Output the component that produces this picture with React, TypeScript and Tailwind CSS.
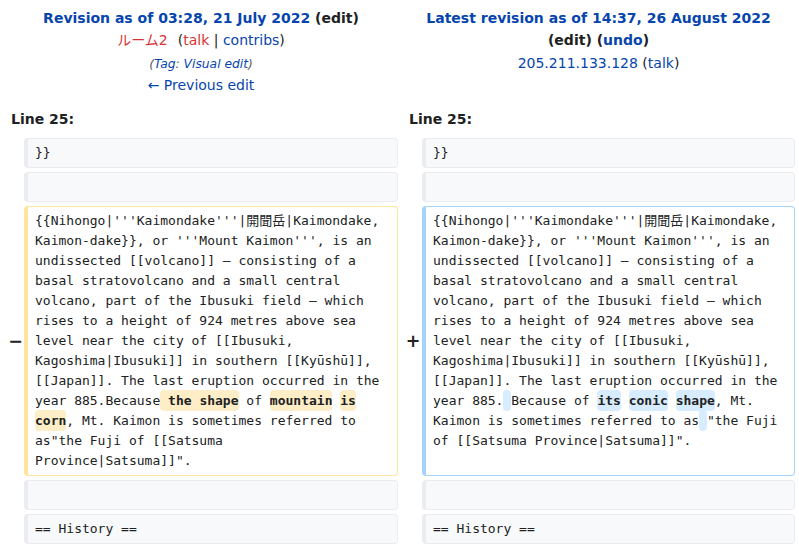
const ui = "font-['DejaVu_Sans','Noto_Sans_CJK_JP',sans-serif]";
const mono = "font-['DejaVu_Sans_Mono','Noto_Sans_CJK_JP',monospace]";

const link = "text-[#0645ad]";
const red = "text-[#d73333]";

function Del({ children }: { children: React.ReactNode }) {
  return <span className="rounded-[4px] bg-[#feeec8] py-[3.25px] font-bold">{children}</span>;
}

function Ins({ children }: { children: React.ReactNode }) {
  return <span className="rounded-[4px] bg-[#d8ecff] py-[3.25px] font-bold">{children}</span>;
}

const cell =
  "rounded-[4px] border border-l-4 pl-[7px] pr-[14px] py-[4px] text-[13px] leading-[20px] whitespace-pre-wrap break-words text-[#202122] " +
  mono;

function Context({ text }: { text?: string }) {
  return (
    <>
      <div />
      <div className={cell + " border-[#eaecf0] bg-[#f8f9fa]"}>{text ? text : <br />}</div>
      <div />
      <div className={cell + " border-[#eaecf0] bg-[#f8f9fa]"}>{text ? text : <br />}</div>
    </>
  );
}

const head =
  "{{Nihongo|'''Kaimondake'''|開聞岳|Kaimondake, Kaimon-dake}}, or '''Mount Kaimon''', is an undissected [[volcano]] — consisting of a basal stratovolcano and a small central volcano, part of the Ibusuki field — which rises to a height of 924 metres above sea level near the city of [[Ibusuki, Kagoshima|Ibusuki]] in southern [[Kyūshū]], [[Japan]]. The last eruption occurred in the year 885.";

export default function App() {
  return (
    <div className={"w-[799px] bg-white text-[14px] text-[#202122] " + ui}>
      <div className="grid grid-cols-[16px_374px_16px_373px] gap-[4px] p-[4px]">
        {/* old revision header */}
        <div className="col-span-2 px-[7px] pt-[3px] pb-[3px] text-center leading-[1.6]">
          <div className="font-bold">
            <span className={link}>Revision as of 03:28, 21 July 2022</span> (edit)
          </div>
          <div>
            <span className={red}>ルーム2</span>
            <span className="ml-[10px]">
              (<span className={red}>talk</span> | <span className={link}>contribs</span>)
            </span>
          </div>
          <div>
            <span className="text-[12.3px] italic text-[#54595d]">
              (<span className={link}>Tag</span>: <span className={link}>Visual edit</span>)
            </span>
          </div>
          <div className={link}>← Previous edit</div>
        </div>

        {/* new revision header */}
        <div className="col-span-2 px-[7px] pt-[3px] pb-[3px] text-center leading-[1.6]">
          <div className="font-bold">
            <span className={link}>Latest revision as of 14:37, 26 August 2022</span> (edit) (
            <span className={link}>undo</span>)
          </div>
          <div>
            <span className={link}>205.211.133.128</span> (<span className={link}>talk</span>)
          </div>
        </div>

        {/* line numbers */}
        <div className="col-span-2 px-[7px] py-[4px] font-bold leading-[1.6]">Line 25:</div>
        <div className="col-span-2 px-[7px] py-[4px] font-bold leading-[1.6]">Line 25:</div>

        <Context text="}}" />
        <Context />

        {/* changed paragraph */}
        <div className="flex items-center justify-center pl-[7px] text-[17.5px] font-bold">−</div>
        <div className={cell + " border-[#ffe49c] bg-white"}>
          {head}Because<Del> the shape</Del> of <Del>mountain</Del> <Del>is</Del> <Del>corn</Del>
          {', Mt. Kaimon is sometimes referred to as"the Fuji of [[Satsuma Province|Satsuma]]".'}
        </div>
        <div className="flex items-center justify-center pl-[6px] text-[17.5px] font-bold">+</div>
        <div className={cell + " border-[#a3d3ff] bg-white"}>
          {head}
          <Ins> </Ins>Because of <Ins>its</Ins> <Ins>conic</Ins> <Ins>shape</Ins>
          {", Mt. Kaimon is sometimes referred to as"}
          <Ins> </Ins>
          {'"the Fuji of [[Satsuma Province|Satsuma]]".'}
        </div>

        <Context />
        <Context text="== History ==" />
      </div>
    </div>
  );
}
